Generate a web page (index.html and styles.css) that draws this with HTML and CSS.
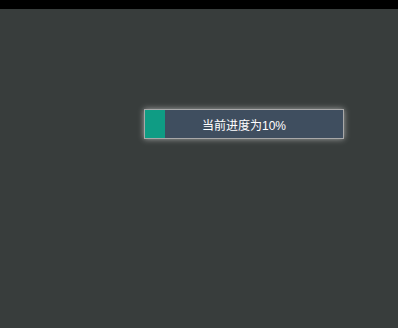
FILE: index.html
```html
<!DOCTYPE html>
<html lang="zh-CN">
<head>
  <meta charset="UTF-8">
  <meta name="viewport" content="width=device-width, initial-scale=1.0">
  <title>进度条</title>
  <link rel="stylesheet" href="styles.css">
</head>
<body>
  <div class="topbar"></div>

  <!-- 进度条 -->
  <div class="progress">
    <div class="progress-fill" style="width: 10%;"></div>
    <div class="progress-text">当前进度为10%</div>
  </div>
</body>
</html>
```

FILE: styles.css
```css
body {
  font-family: "Liberation Sans", "Noto Sans CJK SC", sans-serif;
  margin: 0;
  padding: 0;
  background-color: #383d3c;
  height: 328px;
  overflow: hidden;
}
.topbar {
  height: 9px;
  background-color: #000;
}
.progress {
  position: relative;
  box-sizing: border-box;
  width: 200px;
  height: 30px;
  margin: 100px 0 0 144px;
  background-color: #3f4e5f;
  border: 1px solid #a8a8a8;
  box-shadow: 0 0 6px rgba(255, 255, 255, 0.55);
}
.progress-fill {
  height: 100%;
  background-color: #0f9c84;
}
.progress-text {
  position: absolute;
  left: 0;
  right: 0;
  top: 0;
  bottom: 0;
  display: flex;
  align-items: center;
  justify-content: center;
  color: #fff;
  font-size: 12px;
}
```
